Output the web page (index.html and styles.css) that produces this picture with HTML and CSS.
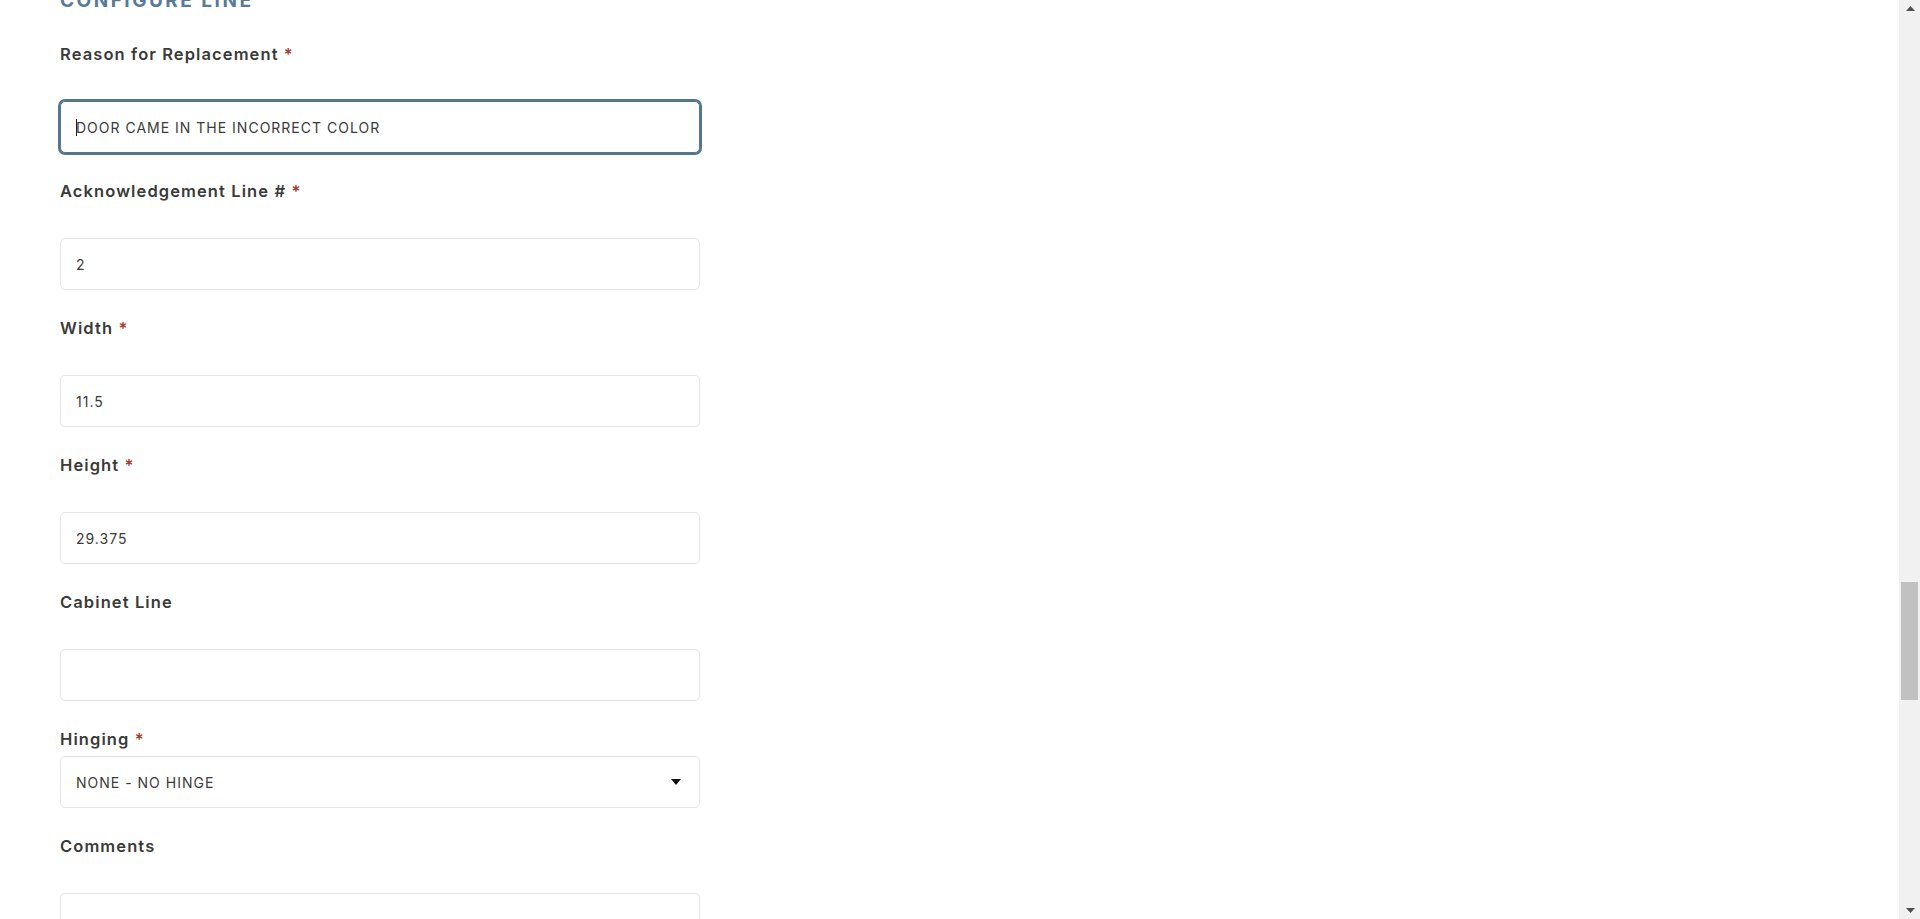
FILE: index.html
```html
<!DOCTYPE html>
<html lang="en">
<head>
    <meta charset="UTF-8">
    <meta name="viewport" content="width=device-width, initial-scale=1.0">
    <title>Configure Line</title>
    <link rel="stylesheet" href="styles.css">
</head>
<body>
    <div class="window">
        <main class="content">
            <h2 class="section_title">Configure Line</h2>
            <form class="line_form">
                <div class="field">
                    <label class="field_label" for="reason">Reason for Replacement <span class="req">*</span></label>
                    <div class="input_wrap is_focused">
                        <input class="field_input" id="reason" type="text" value="DOOR CAME IN THE INCORRECT COLOR">
                    </div>
                </div>
                <div class="field">
                    <label class="field_label" for="ackLine">Acknowledgement Line # <span class="req">*</span></label>
                    <div class="input_wrap">
                        <input class="field_input" id="ackLine" type="text" value="2">
                    </div>
                </div>
                <div class="field">
                    <label class="field_label" for="width">Width <span class="req">*</span></label>
                    <div class="input_wrap">
                        <input class="field_input" id="width" type="text" value="11.5">
                    </div>
                </div>
                <div class="field">
                    <label class="field_label" for="height">Height <span class="req">*</span></label>
                    <div class="input_wrap">
                        <input class="field_input" id="height" type="text" value="29.375">
                    </div>
                </div>
                <div class="field">
                    <label class="field_label" for="cabinetLine">Cabinet Line</label>
                    <div class="input_wrap">
                        <input class="field_input" id="cabinetLine" type="text" value="">
                    </div>
                </div>
                <div class="field field_select">
                    <label class="field_label" for="hinging">Hinging <span class="req">*</span></label>
                    <div class="input_wrap select_wrap">
                        <select class="field_input" id="hinging">
                            <option>NONE - NO HINGE</option>
                            <option>LEFT</option>
                            <option>RIGHT</option>
                        </select>
                        <svg class="select_arrow" width="10" height="6" viewBox="0 0 10 6"><path d="M0 0h10L5 6z" fill="#111"/></svg>
                    </div>
                </div>
                <div class="field">
                    <label class="field_label" for="comments">Comments</label>
                    <div class="input_wrap">
                        <textarea class="field_input field_textarea" id="comments"></textarea>
                    </div>
                </div>
            </form>
        </main>
        <div class="scrollbar">
            <div class="scroll_btn"><svg width="9" height="5" viewBox="0 0 9 5"><path d="M4.5 0L9 5H0z" fill="#505050"/></svg></div>
            <div class="scroll_track"><div class="scroll_thumb"></div></div>
            <div class="scroll_btn"><svg width="9" height="5" viewBox="0 0 9 5"><path d="M0 0h9L4.5 5z" fill="#505050"/></svg></div>
        </div>
    </div>
</body>
</html>
```
FILE: styles.css
```css
* {
    margin: 0;
    padding: 0;
    box-sizing: border-box;
}
body {
    background-color: #fff;
    font-family: Inter, "Open Sans", sans-serif;
    color: #363636;
}
.window {
    width: 100%;
    height: 100vh;
    display: flex;
    overflow: hidden;
}
.content {
    flex: 1;
    padding-left: 60px;
}
.section_title {
    width: 640px;
    margin-top: -11px;
    margin-bottom: 31px;
    height: 24px;
    line-height: 24px;
    font-size: 19px;
    font-weight: 700;
    letter-spacing: 2.5px;
    text-transform: uppercase;
    color: #58799a;
}
.line_form {
    width: 640px;
}
.field {
    margin-bottom: 28px;
}
.field_label {
    display: block;
    height: 20px;
    line-height: 20px;
    font-size: 16.5px;
    font-weight: 600;
    letter-spacing: 1.1px;
    color: #3a3a3a;
    margin-bottom: 37px;
}
.field_select .field_label {
    margin-bottom: 7px;
}
.req {
    color: #a33a2e;
}
.input_wrap {
    position: relative;
    height: 52px;
}
.field_input {
    width: 100%;
    height: 52px;
    padding: 0 15px;
    border: 1px solid #e6e6e6;
    border-radius: 5px;
    background-color: #fff;
    font-family: Inter, "Open Sans", sans-serif;
    font-size: 14px;
    letter-spacing: 1px;
    color: #3a3a3a;
    outline: none;
    appearance: none;
}
.is_focused .field_input {
    border-color: #55768f;
    box-shadow: 0 0 0 2px #55768f;
    border-radius: 5px;
}
/* caret of the focused field */
.is_focused::before {
    content: "";
    position: absolute;
    left: 16px;
    top: 18px;
    width: 1px;
    height: 17px;
    background-color: #222;
}
.field_textarea {
    height: 110px;
    padding-top: 15px;
    resize: none;
}
.select_arrow {
    position: absolute;
    right: 19px;
    top: 23px;
    pointer-events: none;
}
.scrollbar {
    width: 21px;
    height: 100%;
    background-color: #f1f1f1;
    display: flex;
    flex-direction: column;
}
.scroll_btn {
    height: 17px;
    display: flex;
    justify-content: center;
    align-items: center;
    padding-left: 1px;
}
.scroll_track {
    flex: 1;
    padding: 565px 2px 0 2px;
}
.scroll_thumb {
    height: 118px;
    background-color: #c1c1c1;
}
```
